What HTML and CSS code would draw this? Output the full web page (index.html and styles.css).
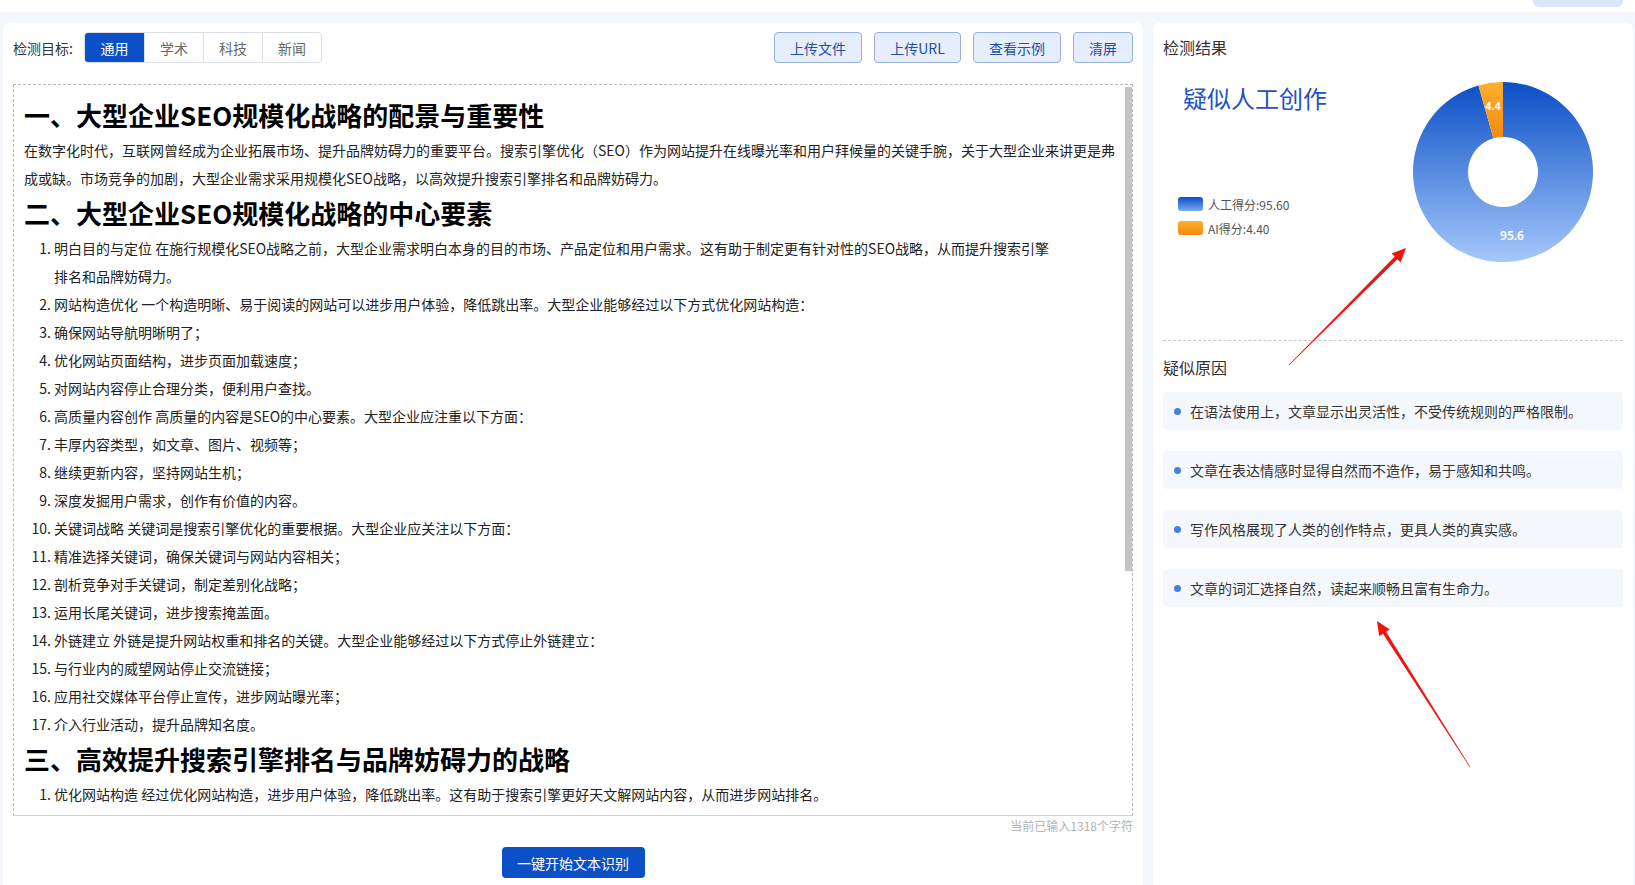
FILE: index.html
```html
<!DOCTYPE html>
<html lang="zh-CN">
<head>
<meta charset="utf-8">
<title>AI文本检测</title>
<link rel="stylesheet" href="styles.css">
</head>
<body>
<div class="topbar"><div class="top-btn"></div></div>
<div class="main">
  <section class="left-card">
    <div class="toolbar">
      <div class="target">
        <span class="target-label">检测目标:</span>
        <div class="tabs">
          <span class="tab active">通用</span>
          <span class="tab">学术</span>
          <span class="tab">科技</span>
          <span class="tab">新闻</span>
        </div>
      </div>
      <div class="actions">
        <button class="act w88">上传文件</button>
        <button class="act w87">上传URL</button>
        <button class="act w88">查看示例</button>
        <button class="act w60">清屏</button>
      </div>
    </div>
    <div class="editor">
      <div class="editor-body">
        <h2 class="h">一、大型企业SEO规模化战略的配景与重要性</h2>
        <p class="para">在数字化时代，互联网曾经成为企业拓展市场、提升品牌妨碍力的重要平台。搜索引擎优化（SEO）作为网站提升在线曝光率和用户拜候量的关键手腕，关于大型企业来讲更是弗成或缺。市场竞争的加剧，大型企业需求采用规模化SEO战略，以高效提升搜索引擎排名和品牌妨碍力。</p>
        <h2 class="h">二、大型企业SEO规模化战略的中心要素</h2>
        <ol class="list">
          <li>明白目的与定位 在施行规模化SEO战略之前，大型企业需求明白本身的目的市场、产品定位和用户需求。这有助于制定更有针对性的SEO战略，从而提升搜索引擎排名和品牌妨碍力。</li>
          <li>网站构造优化 一个构造明晰、易于阅读的网站可以进步用户体验，降低跳出率。大型企业能够经过以下方式优化网站构造：</li>
          <li>确保网站导航明晰明了；</li>
          <li>优化网站页面结构，进步页面加载速度；</li>
          <li>对网站内容停止合理分类，便利用户查找。</li>
          <li>高质量内容创作 高质量的内容是SEO的中心要素。大型企业应注重以下方面：</li>
          <li>丰厚内容类型，如文章、图片、视频等；</li>
          <li>继续更新内容，坚持网站生机；</li>
          <li>深度发掘用户需求，创作有价值的内容。</li>
          <li>关键词战略 关键词是搜索引擎优化的重要根据。大型企业应关注以下方面：</li>
          <li>精准选择关键词，确保关键词与网站内容相关；</li>
          <li>剖析竞争对手关键词，制定差别化战略；</li>
          <li>运用长尾关键词，进步搜索掩盖面。</li>
          <li>外链建立 外链是提升网站权重和排名的关键。大型企业能够经过以下方式停止外链建立：</li>
          <li>与行业内的威望网站停止交流链接；</li>
          <li>应用社交媒体平台停止宣传，进步网站曝光率；</li>
          <li>介入行业活动，提升品牌知名度。</li>
        </ol>
        <h2 class="h">三、高效提升搜索引擎排名与品牌妨碍力的战略</h2>
        <ol class="list">
          <li>优化网站构造 经过优化网站构造，进步用户体验，降低跳出率。这有助于搜索引擎更好天文解网站内容，从而进步网站排名。</li>
          <li>内容营销 经过高质量的内容吸收用户，进步用户粘性，从而提升品牌妨碍力。</li>
          <li>社交媒体营销 应用社交媒体平台停止品牌宣传，扩展品牌妨碍力。</li>
        </ol>
      </div>
      <div class="scroll-track"><div class="scroll-thumb"></div></div>
    </div>
    <div class="counter">当前已输入1318个字符</div>
    <div class="start-row"><button class="start">一键开始文本识别</button></div>
  </section>

  <section class="right-card">
    <div class="panel-title">检测结果</div>
    <div class="chart">
      <div class="chart-left">
        <div class="verdict">疑似人工创作</div>
        <div class="legend">
          <div class="legend-row"><span class="sw sw-blue"></span><span>人工得分:95.60</span></div>
          <div class="legend-row"><span class="sw sw-orange"></span><span>AI得分:4.40</span></div>
        </div>
      </div>
      <svg class="donut" width="180" height="180" viewBox="0 0 180 180">
        <defs>
          <linearGradient id="gBlue" x1="0" y1="0" x2="0" y2="1">
            <stop offset="0" stop-color="#0a4fc6"/>
            <stop offset="1" stop-color="#a6c8fb"/>
          </linearGradient>
          <linearGradient id="gOrange" x1="0" y1="0" x2="0" y2="1">
            <stop offset="0" stop-color="#fbb02e"/>
            <stop offset="1" stop-color="#f7890f"/>
          </linearGradient>
        </defs>
        <path d="M90 0 A90 90 0 1 1 65.44 3.42 L80.45 56.33 A35 35 0 1 0 90 55 Z" fill="url(#gBlue)"/>
        <path d="M65.44 3.42 A90 90 0 0 1 90 0 L90 55 A35 35 0 0 0 80.45 56.33 Z" fill="url(#gOrange)"/>
        <text x="80" y="28" class="lbl-small">4.4</text>
        <text x="99" y="158" class="lbl">95.6</text>
      </svg>
    </div>
    <div class="panel-title reasons-title">疑似原因</div>
    <ul class="reasons">
      <li>在语法使用上，文章显示出灵活性，不受传统规则的严格限制。</li>
      <li>文章在表达情感时显得自然而不造作，易于感知和共鸣。</li>
      <li>写作风格展现了人类的创作特点，更具人类的真实感。</li>
      <li>文章的词汇选择自然，读起来顺畅且富有生命力。</li>
    </ul>
  </section>
</div>

<svg class="annot" width="1635" height="885" viewBox="0 0 1635 885">
  <polygon fill="#f0140f" points="1289.2,365.2 1397.4,259.2 1400.6,262.4 1406,248 1391.6,253.4 1394.8,256.6 1288.8,364.8"/>
  <polygon fill="#f0140f" points="1470.25,766.84 1386.0,631.8 1389.8,629.6 1377,621 1379.2,636.2 1383.0,633.8 1469.75,767.16"/>
</svg>
</body>
</html>
```
FILE: styles.css
```css
* { box-sizing: border-box; }
html, body { margin: 0; padding: 0; }
body {
  width: 1635px;
  height: 885px;
  overflow: hidden;
  background: #f3f6fb;
  font-family: "Noto Sans CJK SC", "Noto Sans", sans-serif;
  color: #333;
  position: relative;
}
.topbar {
  height: 12px;
  background: #fff;
  display: flex;
  justify-content: flex-end;
  padding-right: 12px;
}
.top-btn {
  width: 90px;
  height: 7px;
  background: #dae6fb;
  border-radius: 0 0 6px 6px;
}
.main {
  display: flex;
  gap: 10px;
  padding: 11px 2px 0 3px;
  height: 873px;
}
.left-card {
  width: 1140px;
  background: #fff;
  border-radius: 6px 6px 0 0;
  padding: 9px 10px 0 10px;
}
.toolbar {
  height: 31px;
  display: flex;
  justify-content: space-between;
  align-items: center;
}
.target { display: flex; align-items: center; }
.target-label { font-size: 14px; color: #333; margin-right: 11px; }
.tabs {
  display: flex;
  border: 1px solid #dcdfe6;
  border-radius: 4px;
  overflow: hidden;
  height: 31px;
}
.tab {
  width: 59px;
  display: flex;
  align-items: center;
  justify-content: center;
  font-size: 14px;
  color: #666;
  border-left: 1px solid #dcdfe6;
}
.tab:first-child { border-left: none; }
.tab.active { background: #0b50c6; color: #fff; }
.actions { display: flex; gap: 12px; }
.act {
  height: 31px;
  border: 1px solid #94afe0;
  background: #e7eefb;
  color: #1f4fa6;
  border-radius: 4px;
  font-family: inherit;
  font-size: 14px;
  padding: 0;
}
.w88 { width: 88px; }
.w87 { width: 87px; }
.w60 { width: 60px; }
.editor {
  margin-top: 21px;
  height: 732px;
  border: 1px dashed #b8b8b8;
  border-bottom: 1px solid #d4d4d4;
  display: flex;
  color: #222;
}
.editor-body {
  flex: 1;
  overflow: hidden;
  padding: 9px 8px 0 10px;
}
.scroll-track {
  width: 7px;
  flex: none;
  background: #fff;
  padding-top: 2px;
}
.scroll-thumb {
  height: 484px;
  background: #c4c4c4;
}
.h {
  margin: 0;
  font-size: 26px;
  line-height: 42px;
  font-weight: 700;
  color: #000;
}
.para {
  margin: 0;
  font-size: 14px;
  line-height: 28px;
}
.list {
  margin: 0;
  padding: 0 57px 0 30px;
  font-size: 14px;
  line-height: 28px;
}
.counter {
  text-align: right;
  font-size: 12px;
  line-height: 20px;
  color: #b3b3b3;
}
.start-row {
  display: flex;
  justify-content: center;
  margin-top: 11px;
}
.start {
  width: 143px;
  height: 31px;
  background: #0b50c6;
  color: #fff;
  border: none;
  border-radius: 4px;
  font-family: inherit;
  font-size: 14px;
  padding: 0;
}
.right-card {
  width: 480px;
  background: #fff;
  border-radius: 6px 6px 0 0;
  padding: 13px 10px 0 10px;
}
.panel-title {
  font-size: 16px;
  line-height: 22px;
  color: #333;
}
.chart {
  height: 283px;
  display: flex;
  justify-content: space-between;
  border-bottom: 1px dashed #c8c8c8;
}
.chart-left {
  padding: 23px 0 0 20px;
}
.verdict {
  font-size: 24px;
  line-height: 34px;
  color: #1f52c2;
}
.legend {
  margin-top: 77px;
  margin-left: -5px;
}
.legend-row {
  display: flex;
  align-items: center;
  height: 24px;
  font-size: 12px;
  color: #555;
}
.sw {
  width: 25px;
  height: 14px;
  border-radius: 3px;
  margin-right: 5px;
}
.sw-blue { background: linear-gradient(#0a4fc6, #7aa9f2); }
.sw-orange { background: linear-gradient(#fbb02e, #f7890f); }
.donut {
  margin: 24px 30px 0 0;
}
.lbl { fill: #fff; font-size: 12px; font-weight: 600; text-anchor: middle; font-family: "Noto Sans", sans-serif; }
.lbl-small { fill: #fff; font-size: 11px; font-weight: 700; text-anchor: middle; font-family: "Noto Sans", sans-serif; }
.reasons-title { margin-top: 15px; }
.reasons {
  list-style: none;
  margin: 14px 0 0 0;
  padding: 0;
}
.reasons li {
  height: 38px;
  margin-bottom: 21px;
  background: #f4f7fc;
  border-radius: 4px;
  display: flex;
  align-items: center;
  padding-left: 11px;
  font-size: 14px;
  color: #333;
}
.reasons li::before {
  content: "";
  width: 7px;
  height: 7px;
  border-radius: 50%;
  background: #4a7fe2;
  margin-right: 9px;
  flex: none;
}
.annot {
  position: absolute;
  left: 0;
  top: 0;
  pointer-events: none;
}
```
